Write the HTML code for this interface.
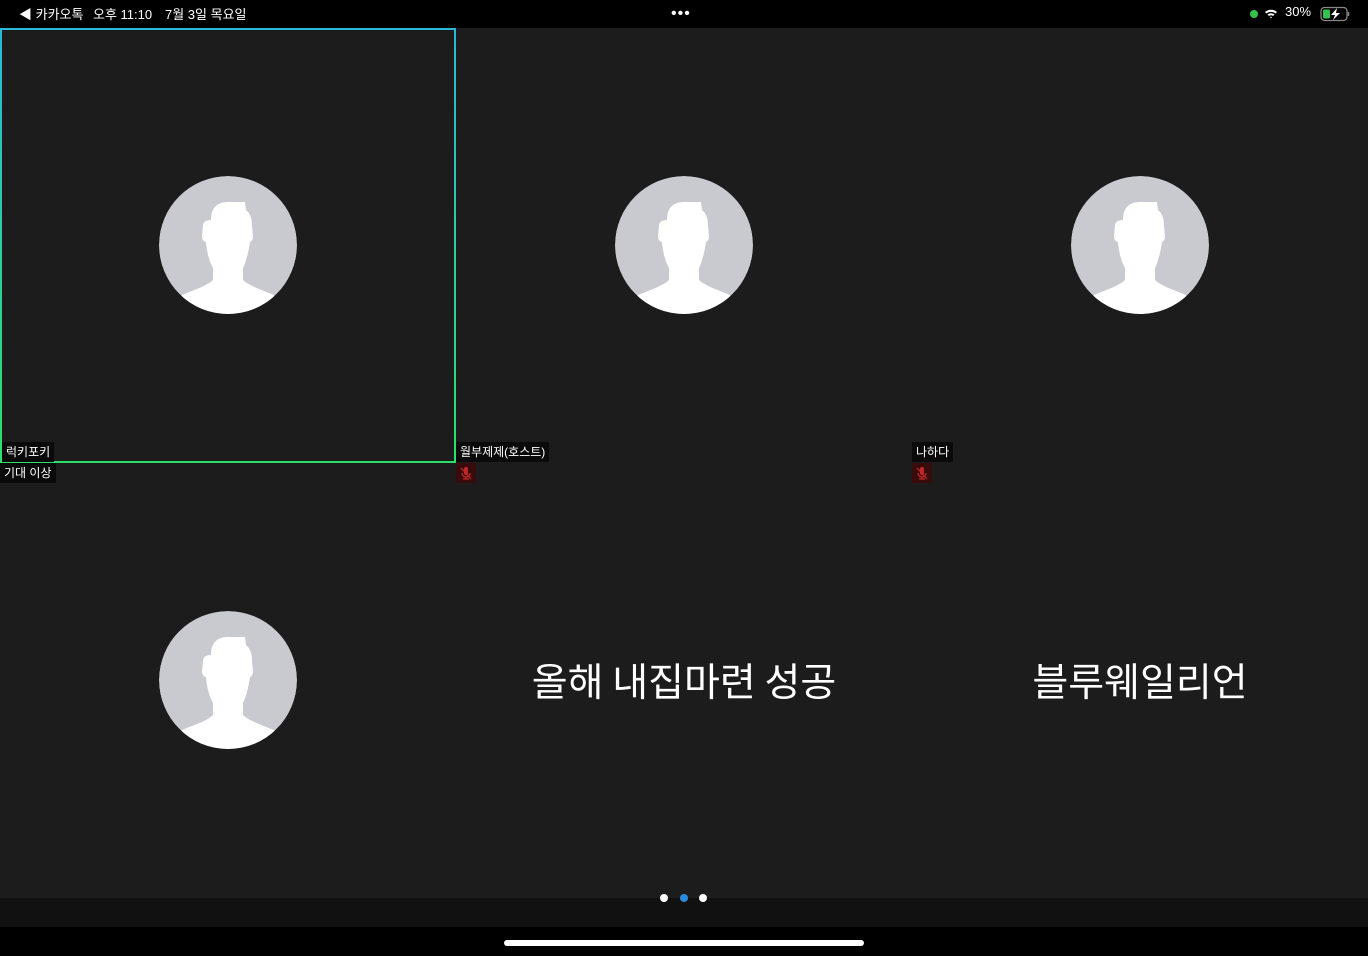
<!DOCTYPE html>
<html><head><meta charset="utf-8"><style>
*{margin:0;padding:0;box-sizing:border-box}
body{width:1368px;height:956px;background:#1c1c1c;position:relative;overflow:hidden;font-family:"Liberation Sans","Noto Sans CJK KR",sans-serif;color:#fff}
.status{position:absolute;left:0;top:0;width:1368px;height:28px;background:#000;font-size:13px}
.status span{position:absolute;top:4px}
.tile-border{position:absolute;left:0;top:28px;width:456px;height:435px;border:2px solid;border-image:linear-gradient(#2ab8d8,#2ee06a) 1}
.av{position:absolute;width:138px;height:138px}
.lbl{position:absolute;background:#0a0a0a;font-size:12px;line-height:20px;padding:0 4px;height:20px}
.mic{position:absolute;width:20px;height:20px;background:#3a0b0b}
.big{position:absolute;font-size:39px;font-family:"Noto Sans CJK KR",sans-serif;text-align:center;width:456px;top:652px;line-height:56px}
</style></head><body>
<div class="status">
<span style="left:19px">◀ 카카오톡</span>
<span style="left:93px">오후 11:10</span>
<span style="left:165px">7월 3일 목요일</span>
<span style="left:671px;top:5px;font-size:16px;letter-spacing:1px">•••</span>
<span style="left:1250px;top:10px;width:8px;height:8px;border-radius:50%;background:#33c24d"></span>
<svg style="position:absolute;left:1264px;top:8px" width="14" height="12" viewBox="0 0 14 12"><path d="M1 4 A9 9 0 0 1 13 4 L11.5 5.5 A7 7 0 0 0 2.5 5.5Z M3.5 6.5 A5.5 5.5 0 0 1 10.5 6.5 L9 8 A3.5 3.5 0 0 0 5 8Z M6 9 L7 10.5 L8 9 A2 2 0 0 0 6 9Z" fill="#fff"/></svg>
<span style="left:1285px">30%</span>
<svg style="position:absolute;left:1320px;top:6px" width="32" height="16" viewBox="0 0 32 16"><rect x="1" y="1.5" width="26" height="13" rx="3.5" fill="none" stroke="#888" stroke-width="1.3"/><rect x="3" y="3.5" width="7" height="9" rx="1.5" fill="#33c24d"/><path d="M28.5 6v4" stroke="#888" stroke-width="1.5"/><path d="M17 2 L11 9 H15 L13 14 L20 7 H16 Z" fill="#fff"/></svg>
</div>

<div class="tile-border"></div>

<svg width="0" height="0" style="position:absolute"><defs>
<clipPath id="c"><circle cx="69" cy="69" r="69"/></clipPath>
<g id="person" clip-path="url(#c)"><circle cx="69" cy="69" r="69" fill="#c8cad0"/>
<path d="M52 44 C52 30 60 26 69 26 L86 26 L87 34 C92 38 93 44 93 50 L94 60 C94 64 92 66 91 66 C89 80 86 88 84 92 L84 104 C92 112 112 116 124 124 L134 140 L4 140 L14 124 C26 116 46 112 54 104 L54 92 C52 88 48 80 47 66 C45 66 43 64 43 60 L44 50 C44 46 47 44 52 44Z" fill="#fff"/></g>
</defs></svg>

<svg class="av" style="left:159px;top:176px" viewBox="0 0 138 138"><use href="#person"/></svg>
<svg class="av" style="left:615px;top:176px" viewBox="0 0 138 138"><use href="#person"/></svg>
<svg class="av" style="left:1071px;top:176px" viewBox="0 0 138 138"><use href="#person"/></svg>
<svg class="av" style="left:159px;top:611px" viewBox="0 0 138 138"><use href="#person"/></svg>

<div class="lbl" style="left:2px;top:442px">럭키포키</div>
<div class="lbl" style="left:0;top:463px">기대 이상</div>
<div class="lbl" style="left:456px;top:442px">월부제제(호스트)</div>
<div class="mic" style="left:456px;top:463px"><svg width="20" height="20" viewBox="0 0 20 20"><rect x="8" y="4" width="4" height="8" rx="2" fill="#c0282a"/><path d="M6 10a4 4 0 0 0 8 0M10 14v2M7 16h6M5 5l10 11" stroke="#c0282a" stroke-width="1.3" fill="none"/></svg></div>
<div class="lbl" style="left:912px;top:442px">나하다</div>
<div class="mic" style="left:912px;top:463px"><svg width="20" height="20" viewBox="0 0 20 20"><rect x="8" y="4" width="4" height="8" rx="2" fill="#c0282a"/><path d="M6 10a4 4 0 0 0 8 0M10 14v2M7 16h6M5 5l10 11" stroke="#c0282a" stroke-width="1.3" fill="none"/></svg></div>

<div class="big" style="left:456px">올해 내집마련 성공</div>
<div class="big" style="left:912px">블루웨일리언</div>

<div style="position:absolute;left:0;top:898px;width:1368px;height:29px;background:#111"></div>
<div style="position:absolute;left:0;top:927px;width:1368px;height:29px;background:#000"></div>
<div style="position:absolute;left:660px;top:894px;width:8px;height:8px;border-radius:50%;background:#fff"></div>
<div style="position:absolute;left:680px;top:894px;width:8px;height:8px;border-radius:50%;background:#2a8ae0"></div>
<div style="position:absolute;left:699px;top:894px;width:8px;height:8px;border-radius:50%;background:#fff"></div>
<div style="position:absolute;left:504px;top:940px;width:360px;height:6px;border-radius:3px;background:#fff"></div>
</body></html>
